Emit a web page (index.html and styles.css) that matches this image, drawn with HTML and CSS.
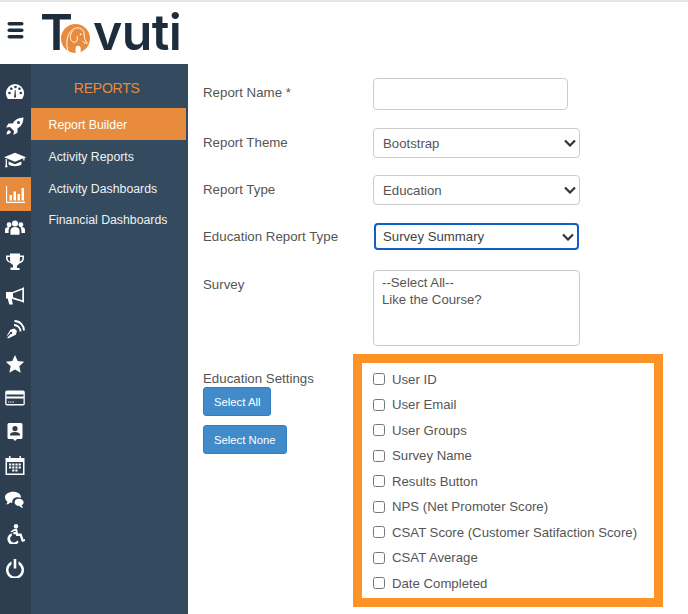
FILE: index.html
```html
<!DOCTYPE html>
<html lang="en">
<head>
<meta charset="utf-8">
<title>Report Builder</title>
<link rel="stylesheet" href="styles.css">
</head>
<body>
<header class="topbar">
  <svg class="burger" viewBox="0 0 16 17"><rect x="0" y="0" width="16" height="3.6" rx="1.8"/><rect x="0" y="6.5" width="16" height="3.6" rx="1.8"/><rect x="0" y="13" width="16" height="3.6" rx="1.8"/></svg>
  <div class="logo">
    <span class="logo-t">T</span>
    <svg class="logo-o" viewBox="0 0 28 28">
      <circle cx="14" cy="14" r="14" fill="#e98b3c"/>
      <path d="M7 27C5 21 5 14 8 9c2.500-4 6-6 10-5 3 1 4.500 3.500 4.500 7 0 2.500.5 5 3 7.500-2 .5-3.500-.5-4.500-2" fill="none" stroke="#fff" stroke-width=".9"/>
      <path d="M12 6c-3 3-4 7-2 10 1.500 2 4 2 5 .5 1-1.500 1-3 .5-5" fill="none" stroke="#fff" stroke-width=".9"/>
      <path d="M14 28v-4c0-2 1-3 2.500-3 1.500 0 2.500 1 2.500 3v4z" fill="#fff"/>
      <circle cx="19" cy="10" r=".9" fill="#fff"/>
    </svg>
    <span class="logo-rest">vuti</span>
  </div>
</header>
<div class="shell">
  <nav class="rail">
    <a class="rail-item"><svg viewBox="0 0 20 20"><path d="M10 2a9 9 0 0 0-9 9c0 2.300.8 4.300 2 6h14c1.200-1.700 2-3.700 2-6a9 9 0 0 0-9-9z"/><circle cx="4.500" cy="11" r="1.300" class="cut"/><circle cx="6.300" cy="6.800" r="1.300" class="cut"/><circle cx="10.500" cy="5" r="1.300" class="cut"/><circle cx="14.500" cy="6.800" r="1.300" class="cut"/><circle cx="15.800" cy="11" r="1.300" class="cut"/><path d="M9 15.500 9.800 8h.8l.4 7.500z" class="cut"/></svg></a>
    <a class="rail-item"><svg viewBox="0 0 20 20"><path d="M18.500 1.500c-5 0-8.500 2-11 6H3.500L1 11.500l4-.5 4 4-.5 4 4-2.500v-4c4-2.500 6-6 6-11zM13.500 5a1.500 1.500 0 1 1 0 3 1.500 1.500 0 0 1 0-3zM4 14c-1.500.6-2.300 2.200-2.500 4.500 2.300-.2 3.900-1 4.500-2.500z"/></svg></a>
    <a class="rail-item"><svg class="wide" viewBox="0 0 24 18"><path d="M12 1 0 6l12 5 9-3.800V9.500h1.400V6.700L24 6zM5 10.500V14c2.500 2.500 11.500 2.500 14 0v-3.500l-7 3zM1.800 7.500V14L1 17h3l-.8-3V8.200z"/></svg></a>
    <a class="rail-item active"><svg class="wide" viewBox="0 0 20 20"><path d="M1 2h1.100v15.800H20V19H1zM4.500 11H7v5.500H4.500zM8.500 7.500H11v9H8.500zM12.500 10H15v6.500h-2.500zM16.500 4H19v12.500h-2.500z"/></svg></a>
    <a class="rail-item"><svg viewBox="0 0 22 20"><circle cx="11" cy="5" r="3.300"/><circle cx="4.500" cy="6.500" r="2.700"/><circle cx="17.500" cy="6.500" r="2.700"/><path d="M6 17.500V13c0-2.500 2-4 5-4s5 1.500 5 4v4.500zM0 15.500V12c0-2 1.500-3 4-3l1 .5c-.5 1-1 2-1 3.500v2.500zM22 15.500V12c0-2-1.500-3-4-3l-1 .5c.5 1 1 2 1 3.500v2.500z"/></svg></a>
    <a class="rail-item"><svg viewBox="0 0 20 20"><path fill-rule="evenodd" d="M5 1.500h10v2h4v2.500c0 3-2 5-4.700 5.500-.7 1-1.500 1.700-2.300 2v2.500h2.500V18h-9v-2.500H8V13c-.8-.3-1.600-1-2.300-2C3 10.500 1 8.500 1 6V3.500h4zM2.600 5v1c0 1.800 1 3 2.700 3.700C5.100 8 5 6.500 5 5zm14.800 0H15c0 1.500-.1 3-.3 4.700 1.700-.7 2.700-1.900 2.700-3.700z"/></svg></a>
    <a class="rail-item"><svg viewBox="0 0 20 20"><path fill-rule="evenodd" d="M19 1l-1.500 1L7.500 6H1v6.500h1.700l1.500 6h3.700l-1.200-5.700L17.500 16l1.500 1zM17.300 3.700v10.600L8 11.200V7.200z"/></svg></a>
    <a class="rail-item"><svg viewBox="0 0 20 20"><path d="M9.500 8.500 12 11l-1.200 3.700L3 18.500l-.8-.8 3.600-3.600a1.200 1.200 0 1 0-.9-.9l-3.600 3.600L5.300 9.700z"/><path d="M9 5c3.500 0 6.500 3 6.500 6.500M9.500 1c5.500 0 9.500 4.500 9.500 9.500" fill="none" stroke="#fff" stroke-width="1.800"/></svg></a>
    <a class="rail-item"><svg viewBox="0 0 20 20"><path d="m10 1 2.700 6.100 6.500.7-4.900 4.400 1.400 6.500L10 15.400l-5.700 3.300 1.400-6.500L.8 7.800l6.500-.7z"/></svg></a>
    <a class="rail-item"><svg viewBox="0 0 20 18"><path fill-rule="evenodd" d="M2 1.500h16A1.800 1.800 0 0 1 19.800 3.300v11.400a1.800 1.800 0 0 1-1.800 1.800H2A1.800 1.800 0 0 1 .2 14.700V3.300A1.800 1.800 0 0 1 2 1.500zM1.500 5.500v2h17v-2zM1.500 9.500v5c0 .4.200.6.600.6h15.800c.4 0 .6-.2.600-.6v-5zM3 12.500h1.300v1H3zm2.300 0h1.300v1H5.300zm2.300 0h1.300v1H7.600z"/></svg></a>
    <a class="rail-item"><svg viewBox="0 0 20 20"><path fill-rule="evenodd" d="M4 1h12a1.500 1.500 0 0 1 1.500 1.500v13A1.500 1.500 0 0 1 16 17h-4l-2 2-2-2H4a1.500 1.500 0 0 1-1.500-1.500v-13A1.500 1.500 0 0 1 4 1zm6 3a2.600 2.600 0 1 0 0 5.200A2.600 2.600 0 0 0 10 4zm-5 9.500h10v-1c0-1.500-2-2.500-5-2.500s-5 1-5 2.500z"/></svg></a>
    <a class="rail-item"><svg viewBox="0 0 20 20"><path fill-rule="evenodd" d="M4 0h1.500v2h9V0H16v2h3.500v17H.5V2H4zM2 6v11.500h16V6zM4 7.500h2.200v2H4zm3.200 0h2.200v2H7.200zm3.200 0h2.200v2h-2.200zm3.200 0h2.200v2h-2.200zM4 10.500h2.200v2H4zm3.200 0h2.200v2H7.200zm3.200 0h2.200v2h-2.200zm3.200 0h2.200v2h-2.200zM7.200 13.500h2.200v2H7.200zm3.200 0h2.200v2h-2.200z"/></svg></a>
    <a class="rail-item"><svg viewBox="0 0 22 20"><path d="M9 1c5 0 8.500 2.500 8.500 5.800 0 .4 0 .7-.1 1C16.500 7.300 15.500 7 14 7c-3.500 0-6 2-6 5 0 .4 0 .8.100 1.100-.9 0-1.600-.1-2.400-.3C4.500 14 3 15 1 15c1-1 1.600-2 1.700-3.200C1 10.600 0 8.900 0 6.800 0 3.500 4 1 9 1z"/><path d="M14.500 8.500c3.500 0 6 1.600 6 4 0 1.400-.8 2.500-2 3.200.1 1 .6 1.800 1.500 2.800-1.800 0-3.200-.8-4.200-2-2.800 0-5.300-1.600-5.300-4 0-2.400 1.900-4 4-4z"/></svg></a>
    <a class="rail-item"><svg viewBox="0 0 20 20"><circle cx="11" cy="2.200" r="2.200"/><path d="m9 5 3-.5 1 5h3.500l2 6 1.300-.4.500 1.900-3.400 1-2-6h-3.700l-.4-1.800H8.500l-.4-2 2.600-.2-.2-1.200-2.500.6L6.800 8.600 5.500 7.600z"/><path d="M6.500 9.300 7 11.500a3.800 3.800 0 1 0 5.300 5l1.300 1.500a6 6 0 1 1-7.100-8.700z"/></svg></a>
    <a class="rail-item"><svg viewBox="0 0 20 20"><path d="M8.700 1h2.600v9.500H8.700zM6.500 3.600v2.900a6.500 6.500 0 1 0 7 0V3.600a9 9 0 1 1-7 0z"/></svg></a>
  </nav>
  <aside class="panel">
    <h2 class="panel-title">REPORTS</h2>
    <ul class="menu">
      <li class="menu-item current">Report Builder</li>
      <li class="menu-item">Activity Reports</li>
      <li class="menu-item">Activity Dashboards</li>
      <li class="menu-item">Financial Dashboards</li>
    </ul>
  </aside>
  <main class="content">
    <div class="row row-name">
      <label class="label">Report Name *</label>
      <input class="field text-field" type="text">
    </div>
    <div class="row row-theme">
      <label class="label">Report Theme</label>
      <select class="field picker"><option>Bootstrap</option></select>
    </div>
    <div class="row row-type">
      <label class="label">Report Type</label>
      <select class="field picker"><option>Education</option></select>
    </div>
    <div class="row row-edu">
      <label class="label">Education Report Type</label>
      <select class="field picker focused"><option>Survey Summary</option></select>
    </div>
    <div class="row row-survey">
      <label class="label">Survey</label>
      <div class="field listbox">
        <div>--Select All--</div>
        <div>Like the Course?</div>
      </div>
    </div>
    <div class="row row-settings">
      <div class="settings-left">
        <label class="label">Education Settings</label>
        <button class="btn" type="button">Select All</button>
        <button class="btn" type="button">Select None</button>
      </div>
      <div class="highlight">
        <label class="check"><input type="checkbox"><span>User ID</span></label>
        <label class="check"><input type="checkbox"><span>User Email</span></label>
        <label class="check"><input type="checkbox"><span>User Groups</span></label>
        <label class="check"><input type="checkbox"><span>Survey Name</span></label>
        <label class="check"><input type="checkbox"><span>Results Button</span></label>
        <label class="check"><input type="checkbox"><span>NPS (Net Promoter Score)</span></label>
        <label class="check"><input type="checkbox"><span>CSAT Score (Customer Satifaction Score)</span></label>
        <label class="check"><input type="checkbox"><span>CSAT Average</span></label>
        <label class="check"><input type="checkbox"><span>Date Completed</span></label>
      </div>
    </div>
  </main>
</div>
</body>
</html>
```

FILE: styles.css
```css
* { box-sizing: border-box; }
html, body { height: 100%; }
body {
  margin: 0;
  height: 614px;
  overflow: hidden;
  background: #fff;
  font-family: "Liberation Sans", Arial, sans-serif;
  font-size: 13.3px;
  color: #555;
  display: flex;
  flex-direction: column;
}
.topbar {
  height: 64px;
  flex: none;
  border-top: 2px solid #e6e6e6;
  display: flex;
  align-items: center;
  padding-left: 7px;
  background: #fff;
}
.burger { width: 17px; height: 17px; fill: #1d2d3e; margin-top: -6px; }
.logo {
  display: flex;
  align-items: flex-start;
  margin-left: 17px;
  margin-top: -3px;
  height: 44px;
  color: #1d2d3e;
  font-family: Inter, "Liberation Sans", sans-serif;
  font-weight: 600;
}
.logo-t { font-size: 50px; line-height: 44px; width: 21px; margin-left: -1px; }
.logo-o { width: 29px; height: 29px; flex: none; margin-top: 14px; }
.logo-rest { font-size: 50px; line-height: 44px; letter-spacing: -0.6px; margin-left: 3px; }
.shell { flex: 1; display: flex; min-height: 0; }
.rail {
  width: 30.500px;
  flex: none;
  background: #2c3e4f;
  padding-top: 10.500px;
  display: flex;
  flex-direction: column;
}
.rail-item {
  height: 34px;
  flex: none;
  display: flex;
  align-items: center;
  justify-content: center;
}
.rail-item svg { width: 20px; height: 20px; fill: #fff; }
.rail-item svg.wide { width: 22px; }
.rail-item .cut { fill: #2c3e4f; }
.rail-item.active { background: #e98b3c; }
.panel {
  width: 157.500px;
  flex: none;
  background: #344a5e;
  color: #eef1f3;
}
.panel-title {
  margin: 0;
  height: 44px;
  line-height: 48px;
  text-align: center;
  font-size: 14px;
  letter-spacing: -0.2px;
  padding-right: 5px;
  font-weight: 400;
  color: #e98b3c;
}
.menu { list-style: none; margin: 0; padding: 0 2px 0 0; }
.menu-item {
  height: 31.500px;
  line-height: 32px;
  padding-left: 18px;
  font-size: 12.300px;
}
.menu-item.current { background: #e98b3c; color: #fff; height: 32px; line-height: 34px; margin-bottom: 1px; }
.content { flex: 1; padding: 14px 0 0 15px; min-width: 0; }
.row { display: flex; align-items: flex-start; }
.label { width: 170px; flex: none; color: #555; display: block; line-height: 20px; }
.field {
  border: 1px solid #ccc;
  border-radius: 4px;
  background-color: #fff;
  color: #555;
  font: 13.2px "Liberation Sans", Arial, sans-serif;
}
.text-field { width: 195px; height: 32px; }
.row-name .label { padding-top: 5px; }
.row-theme { margin-top: 18px; }
.row-type { margin-top: 17px; }
.row-edu { margin-top: 18px; }
.row-theme .label, .row-type .label { padding-top: 5px; }
.row-edu .label { padding-top: 4px; }
.picker {
  width: 207px;
  height: 30px;
  padding: 0 24px 0 9px;
  appearance: none;
  -webkit-appearance: none;
  background-image: url("data:image/svg+xml,%3Csvg xmlns='http://www.w3.org/2000/svg' viewBox='0 0 12 8'%3E%3Cpath d='M1 1.500 6 6.500 11 1.500' fill='none' stroke='%23333' stroke-width='2.200'/%3E%3C/svg%3E");
  background-repeat: no-repeat;
  background-position: right 3px center;
  background-size: 12px 8px;
}
.picker.focused {
  width: 205px;
  height: 27px;
  margin-left: 1px;
  border: 2px solid #0f5fc4;
  border-radius: 4px;
  padding-left: 7px;
  color: #444;
}
.row-survey { margin-top: 20px; }
.row-survey .label { padding-top: 5px; }
.listbox { width: 207px; height: 76px; padding: 4px 8px; line-height: 16.500px; }
.row-settings { margin-top: 8px; }
.settings-left { width: 150px; flex: none; padding-top: 16px; }
.settings-left .label { width: auto; line-height: 18px; margin-bottom: -1px; }
.btn {
  display: block;
  height: 29px;
  padding: 0 10px;
  border: 1px solid #357ebd;
  border-radius: 3px;
  background: #428bca;
  color: #fff;
  font: 11.3px "Liberation Sans", Arial, sans-serif;
  margin-bottom: 9px;
}
.highlight {
  width: 310px;
  height: 253px;
  border: 9px solid #fd9227;
  background: #fff;
  padding: 3.500px 0 0 11px;
  display: flex;
  flex-direction: column;
}
.check {
  height: 25.500px;
  display: flex;
  align-items: center;
  color: #555;
  font-size: 13.2px;
}
.check input {
  appearance: none;
  -webkit-appearance: none;
  width: 12px;
  height: 12px;
  margin: 0 7px 0 0;
  border: 1px solid #777;
  border-radius: 2.500px;
  background: #fff;
}
```
